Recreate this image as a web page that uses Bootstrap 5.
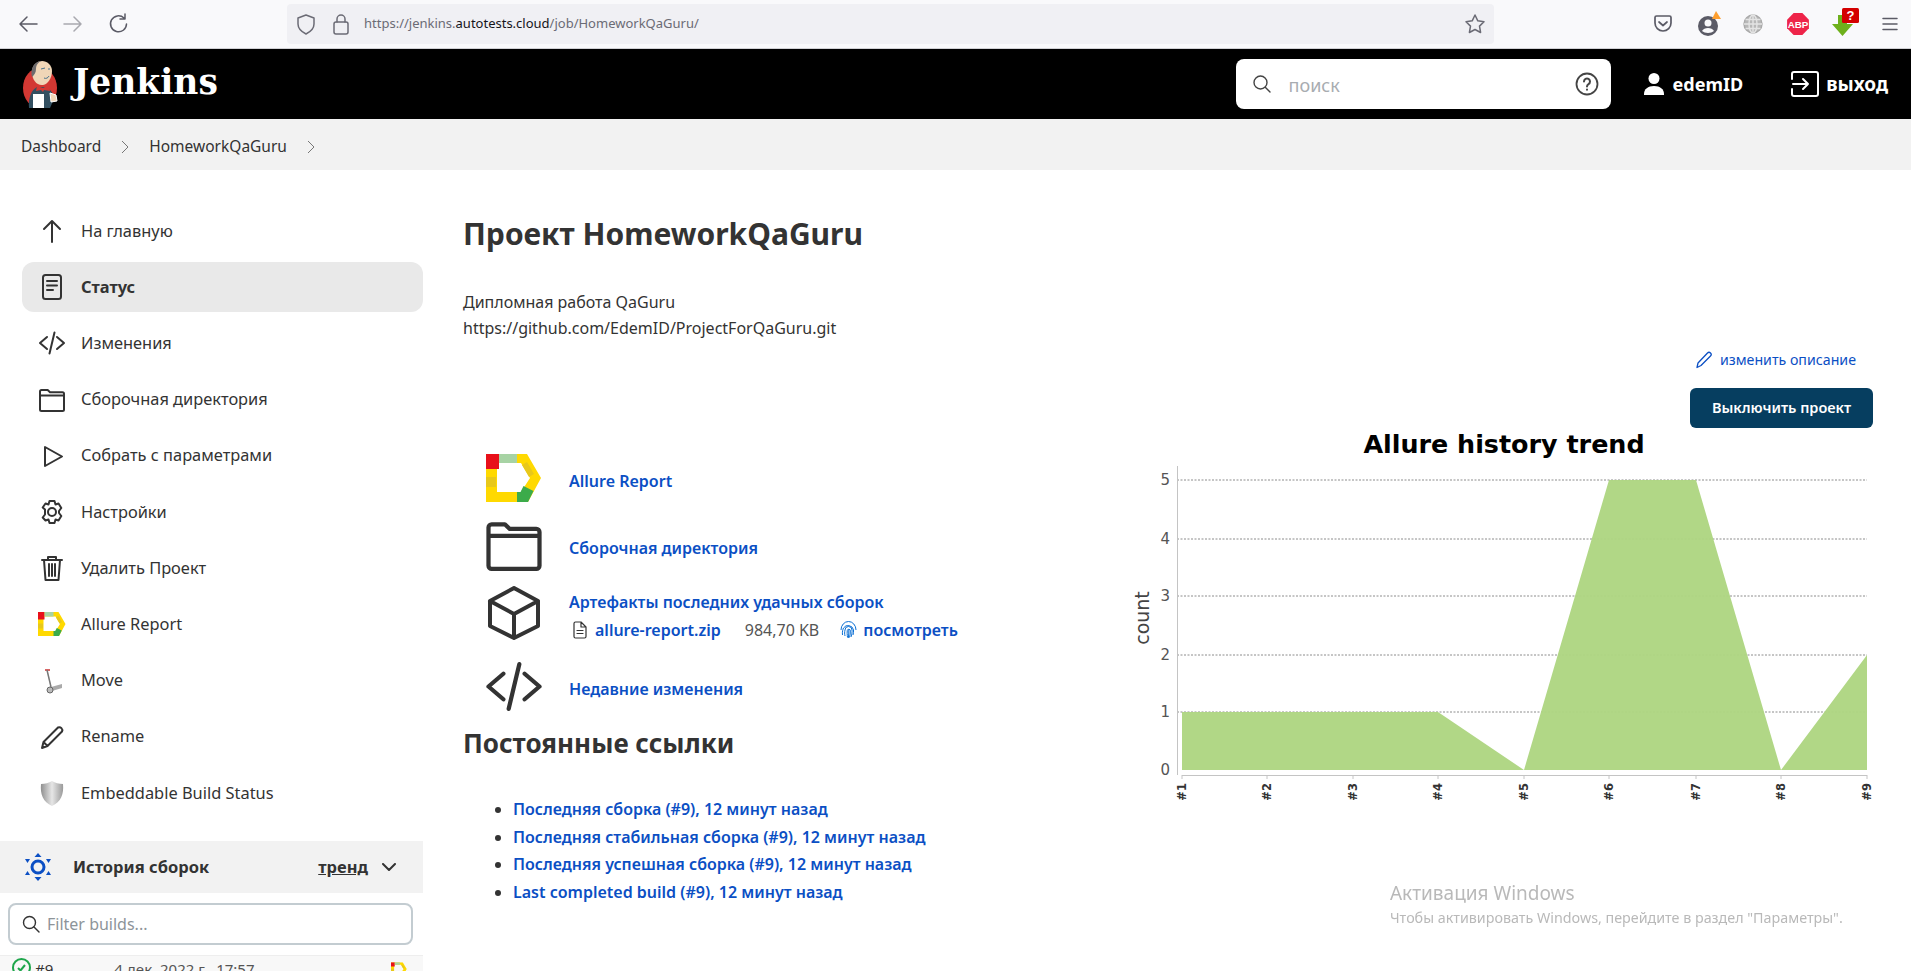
<!DOCTYPE html>
<html lang="ru">
<head>
    <meta charset="UTF-8">
    <meta name="viewport" content="width=device-width, initial-scale=1.0">
    <title>HomeworkQaGuru [Jenkins]</title>
    <link href="https://cdn.jsdelivr.net/npm/bootstrap@5.3.2/dist/css/bootstrap.min.css" rel="stylesheet">
    <style>
        html, body { height: 100%; overflow: hidden; }
        body { font-family: "Noto Sans", "Open Sans", sans-serif; font-size: 16px; color: #333; background: #fff; }
        svg { display: block; flex-shrink: 0; }
        .line-icon { fill: none; stroke: currentColor; stroke-width: 2; stroke-linecap: round; stroke-linejoin: round; }
        .heavy-line { stroke-width: 4; }

        /* browser toolbar */
        .browser-bar { height: 49px; background: #f9f9fb; border-bottom: 1px solid #d0d0d4; color: #5b5b66; }
        .nav-btn-box { width: 45px; }
        .nav-btn-box:first-child { margin-left: 9px; }
        .url-bar { width: 1207px; height: 40px; margin-left: 143px; background: #f0f0f4; border-radius: 4px; padding: 0 8px 0 9px; font-size: 13px; color: #6b6b75; }
        .url-bar b { font-weight: 400; color: #15141a; }
        .url-text { margin-left: 14px; }
        .tool-box { width: 45px; height: 30px; }
        .tool-row { margin-left: 146px; }

        /* jenkins header */
        .top-header { height: 70px; background: #000; color: #fff; padding-left: 22px; padding-right: 23px; }
        .logo-word { font-family: "DejaVu Serif", serif; font-weight: 700; font-size: 34.500px; line-height: 1; margin: 0 0 4px 10px; }
        .search-box { width: 375px; height: 50px; background: #fff; border-radius: 8px; padding: 0 12px 0 16px; color: #444; }
        .search-input { border: 0; outline: 0; padding: 3px 0 0; margin-left: 17px; background: transparent; font-size: 18px; flex-grow: 1; min-width: 0; }
        .search-input::placeholder { color: #a8acb1; }
        .head-link { color: #fff; font-weight: 700; font-size: 18px; text-decoration: none; }
        .user-link { margin-left: 32px; }
        .exit-link { margin-left: 47px; font-size: 19px; gap: 6px; }

        /* breadcrumb */
        .crumb-bar { height: 51px; background: #f2f2f2; padding: 4px 0 0 21px; font-size: 15.5px; color: #333; }
        .crumb-bar a { color: #333; text-decoration: none; }
        .crumb-arrow { margin: 0 20px; color: #777; }

        /* sidebar */
        .page-body { min-height: 0; }
        .side-panel { width: 423px; flex-shrink: 0; padding-top: 36px; }
        .side-list { margin-left: 22px; gap: 6.2px; }
        .side-list .nav-link { height: 50px; padding: 0 0 0 16px; border-radius: 12px; color: #333; font-size: 16.4px; gap: 15px; }
        .side-list .nav-link.active { background: #e9e9e9; font-weight: 700; color: #333; }
        .side-icon { width: 28px; height: 28px; }
        .history-bar { height: 52px; margin-top: 23px; background: #f2f2f2; padding: 0 27px 0 24px; font-weight: 700; font-size: 16.5px; }
        .history-bar a { color: #333; text-decoration: underline; }
        .history-icon { margin-right: 21px; }
        .trend-arrow { margin-left: 14px; }
        .filter-box { height: 42px; margin: 10px 10px 10px 8px; border: 2px solid #c3ccd1; border-radius: 8px; padding: 0 12px; color: #333; }
        .filter-input { border: 0; outline: 0; padding: 0; margin-left: 7px; font-size: 16px; width: 100%; background: transparent; }
        .filter-input::placeholder { color: #8d9499; }
        .build-row { height: 50px; background: #f8f8f8; border-top: 1px solid #eee; padding: 2px 16px 0 12px; font-size: 15px; align-items: flex-start; }
        .build-date { margin-left: 61px; color: #555; }

        /* main */
        .main-panel { min-width: 0; padding: 44px 38px 0 40px; }
        .main-title { font-size: 30px; font-weight: 700; line-height: 40px; margin: 0 0 35px; color: #333; }
        .descr { line-height: 26px; font-size: 16px; }
        .edit-link { font-size: 14.2px; color: #0b4fc4; text-decoration: none; margin: 7px 17px 16px 0; height: 24px; gap: 7px; }
        .off-btn { width: 183px; height: 40px; padding: 0; background: #063e60; border: 0; border-radius: 6px; color: #fff; font-size: 14.5px; font-weight: 600; }
        .off-btn:hover { background: #063e60; color: #fff; }
        .left-col { padding-top: 22px; }
        .chart-col { padding-top: 2px; }
        .task-row { min-height: 62px; margin-left: 23px; margin-bottom: 5px; gap: 27px; }
        .task-icon { width: 56px; margin-bottom: 6px; }
        .task-icon-wide { width: 60px; margin: 0 -2px 6px; }
        .folder-row { margin-bottom: 6px; }
        .recent-row { margin-top: 11px; }
        .zip-line { margin-top: 4px; }
        .blue-link { color: #0b4fc4; font-weight: 600; font-size: 16px; text-decoration: none; }
        .size-text { color: #555; margin: 0 21px 0 24px; }
        .finger-link { margin-left: 6px; }
        .links-title { font-size: 26px; font-weight: 700; line-height: 36px; margin: 4px 0 35px; color: #333; }
        .perma-list { padding-left: 50px; line-height: 27.5px; }
        .trend-chart { width: 743px; height: 380px; }
        .win-mark { position: fixed; left: 1390px; top: 879px; color: #b9b9b9; font-size: 14.3px; line-height: 19px; }
        .win-mark div:first-child { font-size: 19px; line-height: 29px; }
    </style>
</head>
<body class="d-flex flex-column">
    <!-- icons -->
    <svg width="0" height="0" class="position-absolute">
        <symbol id="i-folder" viewBox="0 0 28 24"><path class="line-icon" d="M2 6V3.500A1.500 1.500 0 0 1 3.500 2h6.200l2.300 2.200h12.500A1.500 1.500 0 0 1 26 5.700v15.800a1.500 1.500 0 0 1-1.500 1.500h-21A1.500 1.500 0 0 1 2 21.500Z M2 7.500h24"/></symbol>
        <symbol id="i-code" viewBox="0 0 28 24"><path class="line-icon" d="M9 6 2 12l7 6M19 6l7 6-7 6M16.500 1.500 11.500 22.500"/></symbol>
        <symbol id="i-allure" viewBox="0 0 56 48">
            <path fill-rule="evenodd" fill="#ffd900" d="M0 0h41l14 24-13 24H0ZM11 9v29h24l9-14-9-15Z"/>
            <path d="M0 0h13v15H0Z" fill="#e8101a"/>
            <path d="M13 0h18v9H13z" fill="#a7d3a4"/>
            <path d="M41 8l7 12-5 3-7-12Z" fill="#e8c81a"/>
            <path d="M0 23h10v10H0z" fill="#e8c81a"/>
            <path d="M31 48h11l5.500-11-10-5-3 6H31Z" fill="#3cab4a"/>
        </symbol>
    </svg>

    <div class="browser-bar d-flex align-items-center flex-shrink-0">
        <div class="nav-btn-box"><svg width="22" height="22" viewBox="0 0 22 22" class="line-icon ms-2"><path stroke-width="1.500" d="M20 11H3M10 4l-7 7 7 7"/></svg></div>
        <div class="nav-btn-box"><svg width="22" height="22" viewBox="0 0 22 22" class="line-icon ms-2 opacity-50"><path stroke-width="1.500" d="M2 11h17M12 4l7 7-7 7"/></svg></div>
        <div class="nav-btn-box"><svg width="22" height="22" viewBox="0 0 22 22" class="line-icon ms-2"><path stroke-width="1.500" d="M17 5a8 8 0 1 0 2.500 6M18 1v5h-5"/></svg></div>
        <div class="url-bar d-flex align-items-center">
            <svg width="20" height="22" viewBox="0 0 20 22" class="line-icon"><path stroke-width="1.500" d="M10 2 2 5v6c0 5 4 8 8 10 4-2 8-5 8-10V5Z"/></svg>
            <svg width="18" height="22" viewBox="0 0 18 22" class="line-icon ms-3"><rect x="2" y="9" width="14" height="12" rx="2" stroke-width="1.500"/><path stroke-width="1.500" d="M5 9V6a4 4 0 0 1 8 0v3"/></svg>
            <span class="url-text flex-grow-1">https://jenkins.<b>autotests.cloud</b>/job/HomeworkQaGuru/</span>
            <svg width="22" height="22" viewBox="0 0 22 22" class="line-icon"><path stroke-width="1.500" d="m11 2 2.800 5.800 6.200.9-4.500 4.400 1.100 6.400L11 16.500l-5.600 3 1.100-6.400L2 8.700l6.200-.9Z"/></svg>
        </div>
        <div class="tool-row d-flex align-items-center">
            <div class="tool-box d-flex align-items-center justify-content-center"><svg width="20" height="20" viewBox="0 0 20 20" class="line-icon"><path stroke-width="1.700" d="M2 3.500A1.500 1.500 0 0 1 3.500 2h13A1.500 1.500 0 0 1 18 3.500V9a8 8 0 0 1-16 0ZM6 8l4 3.500L14 8"/></svg></div>
            <div class="tool-box d-flex align-items-center justify-content-center"><svg class="ms-1" width="28" height="30" viewBox="0 0 28 30"><circle cx="12" cy="17" r="10" fill="#5b5b66"/><circle cx="12" cy="14" r="3.500" fill="#f9f9fb"/><path d="M6 22c2-4 10-4 12 0-3 2.500-9 2.500-12 0Z" fill="#f9f9fb"/><path d="m20 2 5 8h-9Z" fill="#ff9f2e"/></svg></div>
            <div class="tool-box d-flex align-items-center justify-content-center"><svg width="20" height="20" viewBox="0 0 20 20" fill="none" stroke="#a9a9a9" stroke-width="1.400"><circle cx="10" cy="10" r="9" fill="#b8b8b8"/><ellipse cx="10" cy="10" rx="4" ry="9" stroke="#e4e4e4"/><path stroke="#e4e4e4" d="M1 10h18M2.500 5.500h15M2.500 14.500h15M10 1v18"/></svg></div>
            <div class="tool-box d-flex align-items-center justify-content-center"><svg width="24" height="24" viewBox="0 0 22 22"><path d="M7 1h8l6 6v8l-6 6H7l-6-6V7Z" fill="#ee2449"/><text x="11" y="14.500" text-anchor="middle" font-family="Liberation Sans" font-weight="700" font-size="9" fill="#fff">ABP</text></svg></div>
            <div class="tool-box d-flex align-items-center justify-content-center"><svg class="ms-1" width="30" height="32" viewBox="0 0 30 32"><path d="M8 7h9v9h6L12.500 28 2 16h6Z" fill="#6eb01c"/><rect x="12" y="0" width="17" height="15" rx="1.500" fill="#d40000"/><text x="20.500" y="12" text-anchor="middle" font-family="Liberation Sans" font-weight="700" font-size="13" fill="#fff">?</text></svg></div>
            <div class="tool-box d-flex align-items-center justify-content-center"><svg class="line-icon ms-1" width="16" height="16" viewBox="0 0 16 16"><path stroke-width="1.500" d="M1 2.500h14M1 8h14M1 13.500h14"/></svg></div>
        </div>
    </div>

    <header class="top-header d-flex align-items-center flex-shrink-0">
        <svg width="41" height="48" viewBox="12 10 41 48">
            <ellipse cx="30" cy="38" rx="17" ry="20" fill="#d33833"/>
            <path d="M19 58c-1-9 2-18 8-21l9 0c5 3 8 7 8 12l-4 9Z" fill="#335061"/>
            <path d="M22 22c0-7 5-11 10-11s10 4 10 10c0 7-4 13-9 14-6 1-11-5-11-13Z" fill="#f0d6b7"/>
            <path d="M22 27c-2-8 2-16 10-16-4 1-6 4-6 8 0 4-2 6-4 8Z" fill="#6d6b6d"/>
            <path d="M31 19l4-1M38 19l2 0M34 28c2 1 4 0 5-2" stroke="#49728b" stroke-width="1" fill="none"/>
            <path d="M27 36l6 2 6-3 1 6-6-1-1 2-2-2-5 1Z" fill="#d33833"/>
            <path d="M23 44h11v14H23Z" fill="#fff"/>
            <path d="M40 43l6 2 1 6-6 1Z" fill="#f0d6b7" stroke="#fff"/>
        </svg>
        <span class="logo-word">Jenkins</span>
        <div class="search-box d-flex align-items-center ms-auto">
            <svg width="20" height="20" viewBox="0 0 20 20" class="line-icon"><circle cx="8.500" cy="8.500" r="6.500" stroke-width="1.400"/><path stroke-width="1.400" d="m13.500 13.500 4.500 4.500"/></svg>
            <input class="search-input" placeholder="поиск">
            <svg width="24" height="24" viewBox="0 0 24 24" class="line-icon ms-2"><circle cx="12" cy="12" r="10.500" stroke-width="1.800"/><path stroke-width="2" d="M9 9.500a3 3 0 1 1 4.500 2.600c-1 .6-1.500 1.200-1.500 2.400M12 17.500v.2"/></svg>
        </div>
        <a href="#" class="head-link user-link d-flex align-items-center"><svg width="22" height="24" viewBox="0 0 22 24" fill="#fff"><circle cx="11" cy="6.500" r="5.500"/><path d="M1 22c0-5 4-8 10-8s10 3 10 8v1H1Z"/></svg><span class="ms-2">edemID</span></a>
        <a href="#" class="head-link exit-link d-flex align-items-center"><svg width="30" height="28" viewBox="0 0 30 28" class="line-icon"><path d="M2 9V4a2 2 0 0 1 2-2h22a2 2 0 0 1 2 2v20a2 2 0 0 1-2 2H4a2 2 0 0 1-2-2v-5M3 14h15M13 9l5 5-5 5"/></svg><span>выход</span></a>
    </header>

    <nav class="crumb-bar d-flex align-items-center flex-shrink-0">
        <a href="#">Dashboard</a>
        <svg class="crumb-arrow" width="8" height="14" viewBox="0 0 8 14" fill="none" stroke="currentColor"><path d="m1 1 6 6-6 6"/></svg>
        <a href="#">HomeworkQaGuru</a>
        <svg class="crumb-arrow" width="8" height="14" viewBox="0 0 8 14" fill="none" stroke="currentColor"><path d="m1 1 6 6-6 6"/></svg>
    </nav>

    <div class="page-body d-flex flex-grow-1">
        <aside class="side-panel">
            <nav class="side-list nav flex-column">
                <a class="nav-link d-flex align-items-center" href="#"><svg class="side-icon" viewBox="0 0 28 28"><path class="line-icon" d="M14 25V5M6 12l8-8 8 8"/></svg>На главную</a>
                <a class="nav-link active d-flex align-items-center" href="#"><svg class="side-icon" viewBox="0 0 28 28"><rect class="line-icon" x="5" y="2" width="18" height="24" rx="2.500"/><path class="line-icon" d="M9 8h10M9 12.500h10M9 17h6"/></svg>Статус</a>
                <a class="nav-link d-flex align-items-center" href="#"><svg class="side-icon" viewBox="0 0 28 24"><use href="#i-code"/></svg>Изменения</a>
                <a class="nav-link d-flex align-items-center" href="#"><svg class="side-icon" viewBox="0 0 28 24"><use href="#i-folder"/></svg>Сборочная директория</a>
                <a class="nav-link d-flex align-items-center" href="#"><svg class="side-icon" viewBox="0 0 28 28"><path class="line-icon" d="M7 5v19l17-9.500Z"/></svg>Собрать с параметрами</a>
                <a class="nav-link d-flex align-items-center" href="#"><svg class="side-icon" viewBox="0 0 28 28"><circle class="line-icon" cx="14" cy="14" r="4"/><path class="line-icon" d="M11.500 3h5l1 3.500 3-1 2.800 4.500-2.300 3v2l2.300 3-2.800 4.500-3-1-1 3.500h-5l-1-3.500-3 1L4.700 19.500l2.300-3v-5L4.700 9.500 7.500 5.500l3 1Z"/></svg>Настройки</a>
                <a class="nav-link d-flex align-items-center" href="#"><svg class="side-icon" viewBox="0 0 28 28"><path class="line-icon" d="M4 6h20M10 6V3h8v3M6 6l1.500 20h13L22 6M11 10v12M14 10v12M17 10v12"/></svg>Удалить Проект</a>
                <a class="nav-link d-flex align-items-center" href="#"><svg class="side-icon" viewBox="0 0 28 28"><use href="#i-allure" y="2" height="24" width="28"/></svg>Allure Report</a>
                <a class="nav-link d-flex align-items-center" href="#"><svg class="side-icon" viewBox="0 0 28 28"><path d="M7 3h5" stroke="#c33" stroke-width="1.500"/><path d="M9 3l4 17" stroke="#777" stroke-width="1.500" fill="none"/><path d="M13 20l11-3v4l-10 3Z" fill="#aaa"/><circle cx="12" cy="23" r="3" fill="#bbb" stroke="#666"/></svg>Move</a>
                <a class="nav-link d-flex align-items-center" href="#"><svg class="side-icon" viewBox="0 0 28 28"><path class="line-icon" d="M4 25l1.500-6L20 4.500a3 3 0 0 1 4 4L9.500 23Z M5.500 19l4 4"/></svg>Rename</a>
                <a class="nav-link d-flex align-items-center" href="#"><svg class="side-icon" viewBox="0 0 28 28"><defs><linearGradient id="shieldFill" x1="0" x2="1"><stop offset="0" stop-color="#8f8f8f"/><stop offset=".5" stop-color="#e6e6e6"/><stop offset="1" stop-color="#9a9a9a"/></linearGradient></defs><path d="M14 2c3 2 7 3 11 3 1 10-2 18-11 22C5 23 2 15 3 5c4 0 8-1 11-3Z" fill="url(#shieldFill)"/></svg>Embeddable Build Status</a>
            </nav>

            <div class="history-bar d-flex align-items-center">
                <svg width="28" height="30" viewBox="0 0 28 30" class="history-icon"><circle cx="14" cy="15" r="6" fill="none" stroke="#0b4fc4" stroke-width="3"/><path fill="#0b4fc4" d="M14 1l3.500 4h-7ZM14 29l-3.500-4h7ZM1 7l5 0-2.500 4ZM27 7h-5l2.500 4ZM1 23h5l-2.500-4ZM27 23h-5l2.500-4Z"/></svg>
                <span>История сборок</span>
                <a href="#" class="ms-auto">тренд</a>
                <svg width="14" height="8" viewBox="0 0 14 8" class="line-icon trend-arrow"><path d="m1 1 6 6 6-6"/></svg>
            </div>
            <div class="filter-box d-flex align-items-center">
                <svg width="18" height="18" viewBox="0 0 18 18" class="line-icon"><circle cx="7.500" cy="7.500" r="6" stroke-width="1.400"/><path stroke-width="1.400" d="m12 12 5 5"/></svg>
                <input class="filter-input" placeholder="Filter builds...">
            </div>
            <div class="build-row d-flex">
                <svg width="19" height="19" viewBox="0 0 19 19" fill="none" stroke="#1ea64b" stroke-width="2"><circle cx="9.500" cy="9.500" r="8.500"/><path d="m6 10 2.500 2.500L13 7"/></svg>
                <span class="ms-1">#9</span>
                <span class="build-date">4 дек. 2022 г., 17:57</span>
                <svg class="ms-auto mt-1" width="16" height="14" viewBox="0 0 56 48"><use href="#i-allure"/></svg>
            </div>
        </aside>

        <main class="main-panel flex-grow-1">
            <h1 class="main-title">Проект HomeworkQaGuru</h1>
            <div class="descr">Дипломная работа QaGuru<br>https://github.com/EdemID/ProjectForQaGuru.git</div>
            <div class="d-flex flex-column align-items-end">
                <a href="#" class="edit-link d-flex align-items-center"><svg width="18" height="18" viewBox="0 0 18 18" class="line-icon"><path stroke-width="1.300" d="M2 16.500l1-4.500L12.500 2a2 2 0 0 1 3 3L6 14.500Z"/></svg>изменить описание</a>
                <button type="button" class="btn off-btn">Выключить проект</button>
            </div>
            <div class="d-flex justify-content-between">
                <div class="left-col">
                    <div class="task-row d-flex align-items-center">
                        <svg class="task-icon" height="48" viewBox="0 0 56 48"><use href="#i-allure"/></svg>
                        <a href="#" class="blue-link">Allure Report</a>
                    </div>
                    <div class="task-row folder-row d-flex align-items-center">
                        <svg class="task-icon-wide" height="51" viewBox="0 0 28 24"><use href="#i-folder"/></svg>
                        <a href="#" class="blue-link">Сборочная директория</a>
                    </div>
                    <div class="task-row d-flex align-items-center">
                        <svg class="task-icon" height="54" viewBox="0 0 56 54"><path class="line-icon heavy-line" d="M28 2 52 15v25L28 52 4 40V15ZM4 15l24 13 24-13M28 28v24"/></svg>
                        <div>
                            <a href="#" class="blue-link d-block">Артефакты последних удачных сборок</a>
                            <div class="zip-line d-flex align-items-center">
                                <svg width="14" height="18" viewBox="0 0 14 18" class="line-icon ms-1"><path stroke-width="1.200" d="M1 2.500A1.500 1.500 0 0 1 2.500 1H8l5 5v9.500a1.500 1.500 0 0 1-1.500 1.500h-9A1.500 1.500 0 0 1 1 15.500ZM8 1v5h5M4 9.500h6M4 12.500h6"/></svg>
                                <a href="#" class="blue-link ms-2">allure-report.zip</a>
                                <span class="size-text">984,70 KB</span>
                                <svg width="17" height="20" viewBox="0 0 17 20" fill="none" stroke="#0b6fd4" stroke-width="1"><path d="M1 10a7.500 8.500 0 0 1 15 0M2.500 15C2 12 3 9 3.500 8a5.500 5.500 0 0 1 10 2c.2 2 0 3-.5 5M5 16c-.5-2-.5-4 0-6a3.500 3.500 0 0 1 7 0c.2 2 0 4-1 7M7.500 17.500c-.3-3-.5-5-.2-7a1.500 1.500 0 0 1 3 .5c.1 2-.1 4-.8 6.500M8.800 10c0 3 0 5-.5 8"/></svg>
                                <a href="#" class="blue-link finger-link">посмотреть</a>
                            </div>
                        </div>
                    </div>
                    <div class="task-row recent-row d-flex align-items-center">
                        <svg class="task-icon-wide" height="51" viewBox="0 0 28 24"><use href="#i-code"/></svg>
                        <a href="#" class="blue-link">Недавние изменения</a>
                    </div>
                    <h2 class="links-title">Постоянные ссылки</h2>
                    <ul class="perma-list mb-0">
                        <li><a href="#" class="blue-link">Последняя сборка (#9), 12 минут назад</a></li>
                        <li><a href="#" class="blue-link">Последняя стабильная сборка (#9), 12 минут назад</a></li>
                        <li><a href="#" class="blue-link">Последняя успешная сборка (#9), 12 минут назад</a></li>
                        <li><a href="#" class="blue-link">Last completed build (#9), 12 минут назад</a></li>
                    </ul>
                </div>
                <div class="chart-col">
                    <svg class="trend-chart" viewBox="0 0 743 380" font-family="DejaVu Sans, sans-serif">
                        <text x="374" y="23" text-anchor="middle" font-weight="700" font-size="25.4" fill="#000">Allure history trend</text>
                        <path d="M47 50h690M47 109h690M47 166h690M47 225h690M47 282h690" stroke="#8c8c8c" stroke-dasharray="2 1.500" stroke-width="1"/>
                        <polygon points="52,282 308,282 394,340 479,50 566,50 651,340 737,225 737,340 52,340" fill="#aed581" fill-opacity=".96"/>
                        <path d="M47.500 36v309M52 345.500h685M52 345v4M137 345v4M223 345v4M308 345v4M394 345v4M479 345v4M566 345v4M651 345v4M737 345v4" stroke="#c4c4c4" stroke-width="1" fill="none"/>
                        <g font-size="15" fill="#555" text-anchor="end">
                            <text x="40" y="55">5</text><text x="40" y="114">4</text><text x="40" y="171">3</text><text x="40" y="230">2</text><text x="40" y="287">1</text><text x="40" y="345">0</text>
                        </g>
                        <text transform="translate(19,188) rotate(-90)" text-anchor="middle" font-size="19" fill="#444">count</text>
                        <g font-size="11.500" font-weight="700" fill="#333" text-anchor="end">
                            <text transform="translate(56,353) rotate(-90)">#1</text><text transform="translate(141,353) rotate(-90)">#2</text><text transform="translate(227,353) rotate(-90)">#3</text><text transform="translate(312,353) rotate(-90)">#4</text><text transform="translate(398,353) rotate(-90)">#5</text><text transform="translate(483,353) rotate(-90)">#6</text><text transform="translate(570,353) rotate(-90)">#7</text><text transform="translate(655,353) rotate(-90)">#8</text><text transform="translate(741,353) rotate(-90)">#9</text>
                        </g>
                    </svg>
                </div>
            </div>
        </main>
    </div>

    <div class="win-mark">
        <div>Активация Windows</div>
        <div>Чтобы активировать Windows, перейдите в раздел "Параметры".</div>
    </div>

    <script src="https://cdn.jsdelivr.net/npm/bootstrap@5.3.2/dist/js/bootstrap.bundle.min.js"></script>
</body>
</html>
